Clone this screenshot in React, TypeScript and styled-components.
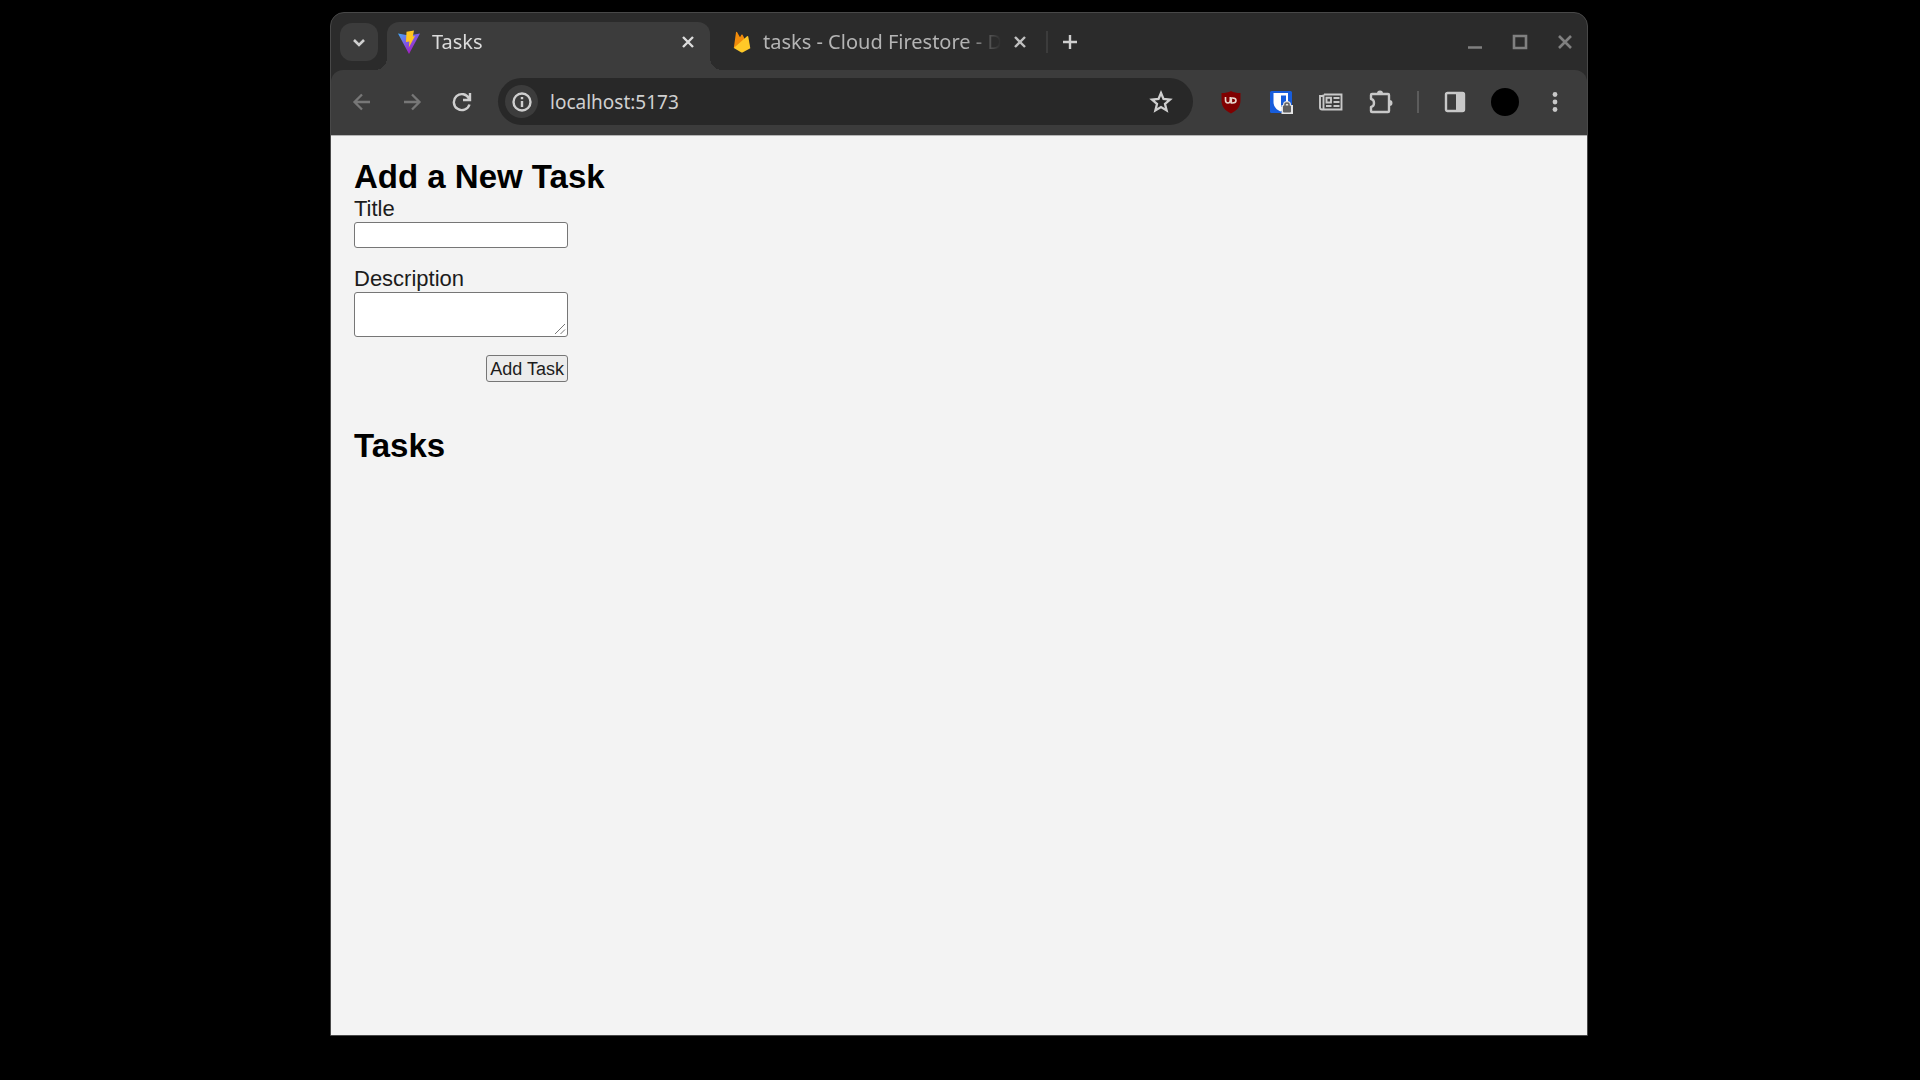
import React, { useState } from "react";
import styled, { createGlobalStyle } from "styled-components";

const GlobalStyle = createGlobalStyle`
  *, *::before, *::after { box-sizing: border-box; }
  body { margin: 0; background: #000; }
  button, input, textarea { font: inherit; color: inherit; }
`;

const Desktop = styled.div`
  display: flex;
  min-height: 100vh;
  padding: 12px 332px 44px 330px;
  @media (max-width: 1500px) {
    padding: 12px;
  }
`;

const BrowserWindow = styled.div`
  flex: 1;
  min-width: 0;
  display: flex;
  flex-direction: column;
  background: #2b2b2b;
  border: 1px solid #484848;
  border-radius: 14px 14px 0 0;
  overflow: hidden;
  font-family: "Noto Sans", "Open Sans", sans-serif;
`;

const TabStrip = styled.header`
  display: flex;
  align-items: center;
  height: 57px;
  padding: 0 10px 0 9px;
  color: #dcdcdc;
`;

const IconButton = styled.button<{ $size?: number; $tone?: string }>`
  flex: none;
  display: grid;
  place-items: center;
  width: ${(p) => p.$size ?? 36}px;
  height: ${(p) => p.$size ?? 36}px;
  padding: 0;
  border: 0;
  border-radius: 50%;
  background: transparent;
  color: ${(p) => p.$tone ?? "#cfcfcf"};
`;

const TabSearch = styled(IconButton)`
  border-radius: 12px;
  background: #3c3c3c;
  margin-right: 9px;
`;

const Tab = styled.div<{ $active?: boolean }>`
  position: relative;
  align-self: flex-end;
  display: flex;
  align-items: center;
  flex: 0 1 ${(p) => (p.$active ? 323 : 336)}px;
  min-width: 0;
  height: 48px;
  padding: ${(p) => (p.$active ? "0 11px 8px 10px" : "0 15px 8px 22px")};
  border-radius: 12px 12px 0 0;
  color: ${(p) => (p.$active ? "#dcdcdc" : "#b4b4b4")};
  background: ${(p) => (p.$active ? "#3c3c3c" : "transparent")};

  &::before,
  &::after {
    content: ${(p) => (p.$active ? '""' : "none")};
    position: absolute;
    bottom: 0;
    width: 12px;
    height: 12px;
  }
  &::before {
    right: 100%;
    background: radial-gradient(circle at 0 0, transparent 12px, #3c3c3c 12px);
  }
  &::after {
    left: 100%;
    background: radial-gradient(circle at 100% 0, transparent 12px, #3c3c3c 12px);
  }
`;

const TabTitle = styled.button`
  flex: 1;
  min-width: 0;
  display: flex;
  align-items: center;
  gap: 11px;
  padding: 0;
  border: 0;
  background: none;
  font-size: 20px;
  line-height: 28px;
  text-align: left;
`;

const TabText = styled.span`
  flex: 1;
  overflow: hidden;
  white-space: nowrap;
  mask-image: linear-gradient(to right, #000 calc(100% - 44px), transparent calc(100% - 8px));
`;

const Separator = styled.span<{ $gap: number }>`
  flex: none;
  width: 2px;
  height: 22px;
  margin: 0 ${(p) => p.$gap}px;
  background: ${(p) => (p.$gap > 10 ? "#5c5c5c" : "#3c3c3c")};
`;

const WindowControls = styled.div`
  display: flex;
  gap: 21px;
  margin-left: auto;
`;

const Toolbar = styled.nav`
  display: flex;
  align-items: center;
  height: 65px;
  padding: 0 14px 2px 13px;
  border-radius: 12px 12px 0 0;
  background: #3c3c3c;
`;

const NavButtons = styled.div`
  display: flex;
  gap: 14px;
`;

const AddressBar = styled.div`
  flex: 1;
  min-width: 0;
  display: flex;
  align-items: center;
  height: 47px;
  margin: 0 20px 0 18px;
  padding: 0 14px 0 7px;
  border-radius: 24px;
  background: #282828;
`;

const InfoButton = styled(IconButton)`
  background: #3c3c3c;
`;

const Address = styled.input`
  flex: 1;
  min-width: 0;
  padding: 0 0 0 12px;
  border: 0;
  outline: 0;
  background: transparent;
  color: #d0d0d0;
  font-size: 19px;
  line-height: 28px;
`;

const Extensions = styled.div`
  display: flex;
  gap: 14px;
`;

const ToolbarEnd = styled.div`
  display: flex;
  gap: 14px;
`;

const Avatar = styled.span`
  width: 28px;
  height: 28px;
  border-radius: 50%;
  background: #000;
`;

const Page = styled.main`
  flex: 1;
  padding: 22px 23px;
  border-top: 1px solid #b4b4b4;
  background: #f3f3f3;
  color: #000;
  font-family: "Liberation Sans", Arial, sans-serif;
  font-size: 22px;
  line-height: 26px;
`;

const Heading = styled.h2`
  margin: 0;
  font-size: 33px;
  line-height: 38px;
`;

const TaskForm = styled.form`
  display: flex;
  flex-direction: column;
  gap: 18px;
  width: 214px;
  margin-bottom: 45px;
`;

const Field = styled.div`
  display: flex;
  flex-direction: column;
  color: #1c1c1c;
`;

const TextInput = styled.input`
  width: 100%;
  height: 26px;
  padding: 1px 3px;
  border: 1px solid #767676;
  border-radius: 3px;
  background: #fff;
  font-size: 18px;
`;

const TextArea = styled.textarea`
  display: block;
  width: 100%;
  height: 45px;
  padding: 3px;
  border: 1px solid #767676;
  border-radius: 3px;
  background: #fff;
  font-size: 18px;
  line-height: 20px;
  resize: none;
`;

const AreaFrame = styled.div`
  position: relative;
`;

const Grip = styled.svg`
  position: absolute;
  right: 2px;
  bottom: 2px;
  pointer-events: none;
`;

const SubmitButton = styled.button`
  align-self: flex-end;
  height: 27px;
  padding: 0 3px;
  border: 1px solid #767676;
  border-radius: 3px;
  background: #ececec;
  color: #1c1c1c;
  font-size: 18px;
  line-height: 20px;
  white-space: nowrap;
`;

const Glyph = ({ d, size = 20, width = 2 }: { d: string; size?: number; width?: number }) => (
  <svg width={size} height={size} viewBox={`0 0 ${size} ${size}`} fill="none" stroke="currentColor" strokeWidth={width} aria-hidden="true">
    <path d={d} />
  </svg>
);

const CROSS = "M5 5 15 15M15 5 5 15";

const ViteLogo = () => (
  <svg width="24" height="24" viewBox="0 0 24 24" aria-hidden="true">
    <defs>
      <linearGradient id="vite" x1="2" y1="3" x2="14" y2="22" gradientUnits="userSpaceOnUse">
        <stop stopColor="#41a8f5" />
        <stop offset=".5" stopColor="#7a5fe8" />
        <stop offset="1" stopColor="#a020c0" />
      </linearGradient>
    </defs>
    <path d="M1 3.5 12 5.5 23 3.5 12 24Z" fill="url(#vite)" />
    <path d="M9.5 1.8 17 .5 15.8 6.4 18 6 11.8 17.5 12.4 11.4 9 12Z" fill="#ffc61e" />
  </svg>
);

const FirebaseLogo = () => (
  <svg width="20" height="22" viewBox="0 0 18 22" aria-hidden="true">
    <path d="M.8 17 3 1.2Q3.3.3 4 1L7 6.3 8.4 3.8Q9 3 9.6 3.8L16 17Z" fill="#f28c0b" />
    <path d="M.8 17 14 5.2Q15 4.8 15.3 5.8L17.3 17.2 10 21.3Q9 21.8 8 21.3Z" fill="#ffc928" />
  </svg>
);

const ShieldIcon = () => (
  <svg width="22" height="24" viewBox="0 0 22 24" aria-hidden="true">
    <path d="M11 1C8.5 2.6 5.5 3 1.5 3V10C1.5 17 5 20.5 11 23.5 17 20.5 20.5 17 20.5 10V3C16.5 3 13.5 2.6 11 1Z" fill="#800000" />
    <path d="M5.5 7V10Q5.5 13 8 13 10.3 13 10.3 10V7M10.3 8H12.5Q16 8 16 10.5T12.5 13H11.3V8" fill="none" stroke="#e8d5cc" strokeWidth="1.6" />
  </svg>
);

const VaultIcon = () => (
  <svg width="24" height="24" viewBox="0 0 24 24" aria-hidden="true">
    <rect x="1" y="1" width="22" height="22" rx="1.5" fill="#175ddc" />
    <path d="M4.500 3H19V12C19 17 15 20 11.500 21.500 8 20 4.500 17 4.500 12Z" fill="#fff" />
    <path d="M12 5.500H17V12Q16 15 12 17Z" fill="#175ddc" />
    <path d="M14 15V14.500Q14 11 18 11T22 14.500V15H24V24H12.500V15Z" fill="#e4e4e4" />
    <rect x="14" y="15.500" width="8" height="7" rx="1" fill="#606060" />
    <path d="M16 16V14.500Q16 13 18 13T20 14.500V16" fill="none" stroke="#606060" strokeWidth="1.5" />
  </svg>
);

const NewsIcon = () => (
  <svg width="24" height="18" viewBox="0 0 24 18" fill="none" stroke="#c8c8c8" strokeWidth="1.9" aria-hidden="true">
    <path d="M5 1.500H22.500V16.500H3Q1 16.500 1 14.500V3H4.500M4.500 1.500V16M7.500 4.700H12V9.500H7.500ZM14.500 5H20.500M14.500 9H20.500M7 13H12.500M14.500 13H20.500" />
  </svg>
);

const PuzzleIcon = () => (
  <svg width="26" height="26" viewBox="0 0 26 26" aria-hidden="true">
    <path d="M3 6Q3 5 4 5H20Q21 5 21 6V22Q21 23 20 23H4Q3 23 3 22V18Q6 17.500 6 14T3 10Z" fill="none" stroke="#c8c8c8" strokeWidth="2.4" strokeLinejoin="round" />
    <path d="M9 5V4.500A3 3 0 0 1 15 4.500V5ZM21 11H21.500A3 3 0 0 1 21.500 17H21Z" fill="#c8c8c8" />
  </svg>
);

const PanelIcon = () => (
  <svg width="22" height="22" viewBox="0 0 22 22" aria-hidden="true">
    <rect x="2" y="2" width="18" height="18" rx="1.5" fill="none" stroke="#c8c8c8" strokeWidth="2.4" />
    <path d="M12 2H20V20H12Z" fill="#c8c8c8" />
  </svg>
);

const MenuIcon = () => (
  <svg width="6" height="22" viewBox="0 0 6 22" fill="#c8c8c8" aria-hidden="true">
    <circle cx="3" cy="3.5" r="2.4" />
    <circle cx="3" cy="11" r="2.4" />
    <circle cx="3" cy="18.5" r="2.4" />
  </svg>
);

export default function App() {
  const [url, setUrl] = useState("localhost:5173");

  return (
    <Desktop>
      <GlobalStyle />
      <BrowserWindow>
        <TabStrip>
          <TabSearch $size={38} aria-label="Search tabs">
            <Glyph d="M5 8 10 13 15 8" width={2.6} />
          </TabSearch>
          <Tab $active>
            <TabTitle>
              <ViteLogo />
              <TabText>Tasks</TabText>
            </TabTitle>
            <IconButton $size={22} $tone="#dcdcdc" aria-label="Close tab">
              <Glyph d={CROSS} width={2.4} />
            </IconButton>
          </Tab>
          <Tab>
            <TabTitle>
              <FirebaseLogo />
              <TabText>tasks - Cloud Firestore - D</TabText>
            </TabTitle>
            <IconButton $size={22} $tone="#c0c0c0" aria-label="Close tab">
              <Glyph d={CROSS} width={2.4} />
            </IconButton>
          </Tab>
          <Separator $gap={0} />
          <IconButton $size={44} aria-label="New tab">
            <Glyph d="M10 3V17M3 10H17" width={2.4} />
          </IconButton>
          <WindowControls>
            <IconButton $size={24} $tone="#808080" aria-label="Minimize">
              <Glyph d="M3 15.5H17" width={2.6} />
            </IconButton>
            <IconButton $size={24} $tone="#808080" aria-label="Maximize">
              <Glyph d="M4 4H16V16H4Z" width={2.6} />
            </IconButton>
            <IconButton $size={24} $tone="#808080" aria-label="Close">
              <Glyph d="M4 4 16 16M16 4 4 16" width={2.6} />
            </IconButton>
          </WindowControls>
        </TabStrip>

        <Toolbar>
          <NavButtons>
            <IconButton $tone="#777" aria-label="Back">
              <Glyph d="M18 10H3M10 2.5 2.5 10 10 17.5" width={2.3} />
            </IconButton>
            <IconButton $tone="#777" aria-label="Forward">
              <Glyph d="M2 10H17M10 2.5 17.5 10 10 17.5" width={2.3} />
            </IconButton>
            <IconButton aria-label="Reload">
              <Glyph d="M17.5 12.5A8 8 0 1 1 17 6.5M18 1V8H11" width={2.4} />
            </IconButton>
          </NavButtons>
          <AddressBar>
            <InfoButton $size={33} aria-label="Site information">
              <Glyph d="M10 1.5A8.5 8.5 0 1 1 10 18.5 8.5 8.5 0 1 1 10 1.5M10 9V15M10 5V7.2" width={2.4} />
            </InfoButton>
            <Address aria-label="Address" value={url} onChange={(e) => setUrl(e.target.value)} />
            <IconButton aria-label="Bookmark this page">
              <Glyph size={24} width={2.3} d="M12 3 14.5 9 21 9.6 16 14 17.6 20.4 12 17 6.4 20.4 8 14 3 9.6 9.5 9Z" />
            </IconButton>
          </AddressBar>
          <Extensions>
            <IconButton aria-label="Ad blocker"><ShieldIcon /></IconButton>
            <IconButton aria-label="Password vault"><VaultIcon /></IconButton>
            <IconButton aria-label="Reader"><NewsIcon /></IconButton>
            <IconButton aria-label="Extensions"><PuzzleIcon /></IconButton>
          </Extensions>
          <Separator $gap={18} />
          <ToolbarEnd>
            <IconButton aria-label="Side panel"><PanelIcon /></IconButton>
            <IconButton aria-label="Profile"><Avatar /></IconButton>
            <IconButton aria-label="Menu"><MenuIcon /></IconButton>
          </ToolbarEnd>
        </Toolbar>

        <Page>
          <Heading>Add a New Task</Heading>
          <TaskForm onSubmit={(e) => e.preventDefault()}>
            <Field>
              <label htmlFor="title">Title</label>
              <TextInput id="title" />
            </Field>
            <Field>
              <label htmlFor="description">Description</label>
              <AreaFrame>
                <TextArea id="description" />
                <Grip width="12" height="12" viewBox="0 0 12 12" stroke="#777" aria-hidden="true">
                  <path d="M1 11 11 1M6.5 11 11 6.5" />
                </Grip>
              </AreaFrame>
            </Field>
            <SubmitButton type="submit">Add Task</SubmitButton>
          </TaskForm>
          <Heading>Tasks</Heading>
        </Page>
      </BrowserWindow>
    </Desktop>
  );
}
